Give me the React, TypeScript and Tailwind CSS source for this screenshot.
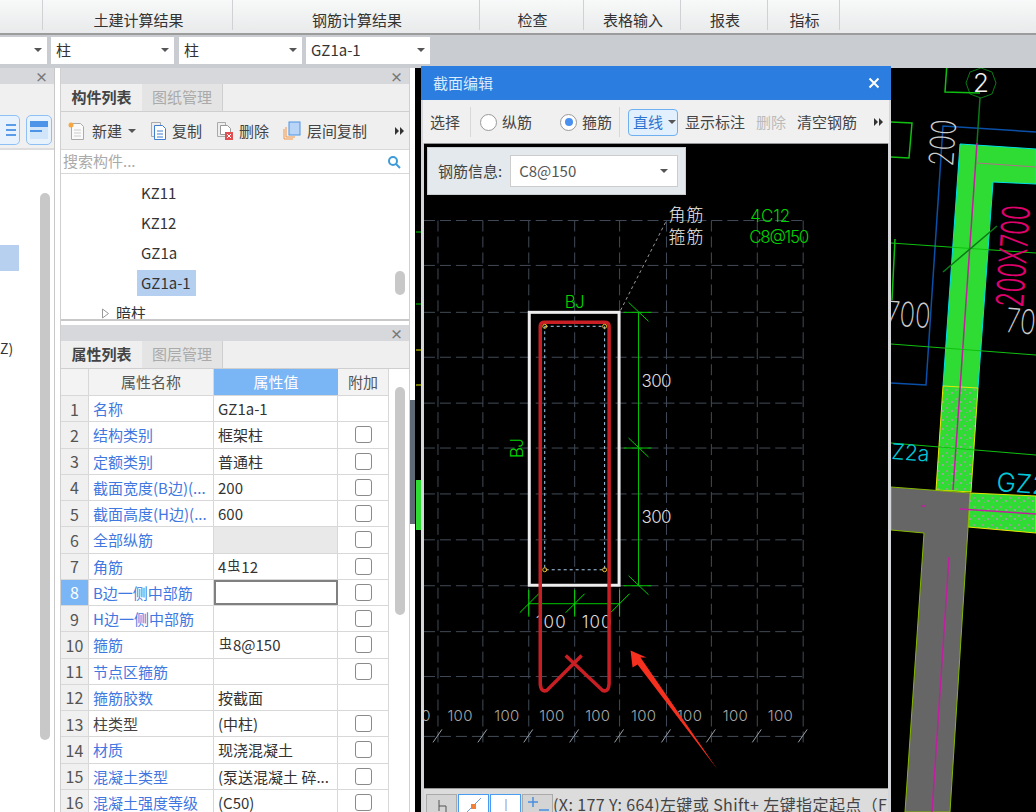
const uiFont = "font-['Noto_Sans_CJK_SC','Liberation_Sans',sans-serif]";
const cadFont = "Inter,'DejaVu Sans',sans-serif";

const ribbonTabs = [
  { w: "w-[43px]", label: "" },
  { w: "w-[190px]", label: "土建计算结果" },
  { w: "w-[247px]", label: "钢筋计算结果" },
  { w: "w-[104px]", label: "检查" },
  { w: "w-[97px]", label: "表格输入" },
  { w: "w-[87px]", label: "报表" },
  { w: "w-[72px]", label: "指标" },
];

const rows = [
  { name: "名称", value: "GZ1a-1", check: false },
  { name: "结构类别", value: "框架柱", check: true },
  { name: "定额类别", value: "普通柱", check: true },
  { name: "截面宽度(B边)(...", value: "200", check: true },
  { name: "截面高度(H边)(...", value: "600", check: true },
  { name: "全部纵筋", value: "", check: true },
  { name: "角筋", value: "4|12", check: true },
  { name: "B边一侧中部筋", value: "", check: true },
  { name: "H边一侧中部筋", value: "", check: true },
  { name: "箍筋", value: "|8@150", check: true },
  { name: "节点区箍筋", value: "", check: true },
  { name: "箍筋胶数", value: "按截面", check: false },
  { name: "柱类型", value: "(中柱)", check: true },
  { name: "材质", value: "现浇混凝土", check: true },
  { name: "混凝土类型", value: "(泵送混凝土 碎...", check: true },
  { name: "混凝土强度等级", value: "(C50)", check: true },
];

function Caret({ className = "" }: { className?: string }) {
  return (
    <span
      className={`inline-block h-0 w-0 border-x-[4px] border-t-[4px] border-x-transparent border-t-[#555] ${className}`}
    />
  );
}

function More() {
  return (
    <svg width="9" height="8" viewBox="0 0 9 8" className="shrink-0">
      <path d="M0 0l4 4-4 4zM5 0l4 4-4 4z" fill="#333" />
    </svg>
  );
}

function Combo({ label, className }: { label: string; className: string }) {
  return (
    <div
      className={`flex h-[27px] items-center justify-between bg-white pl-[5px] pr-[5px] text-[15px] text-[#333] ${className}`}
    >
      <span>{label}</span>
      <Caret />
    </div>
  );
}

function PanelHeader() {
  return (
    <div className="flex h-[16px] shrink-0 items-center justify-end bg-[#d6d8db] pr-[6px]">
      <span className="text-[13px] leading-none font-bold text-[#777]">×</span>
    </div>
  );
}

function Tabs({ active, other }: { active: string; other: string }) {
  return (
    <div className="flex h-[28px] shrink-0 border-b border-[#cfcfcf] bg-[#efefef] text-[15px]">
      <div className="flex w-[81px] items-center justify-center font-bold text-[#444]">{active}</div>
      <div className="flex w-[81px] items-center justify-center border-r border-[#cfcfcf] bg-[#e4e4e4] text-[#aaa]">
        {other}
      </div>
    </div>
  );
}

function PropertyRow({ row, index }: { row: (typeof rows)[number]; index: number }) {
  const selected = index === 8;
  const [before, after] = row.value.split("|");
  return (
    <div className="flex h-[26.25px] border-b border-[#d8d8d8] text-[15px]">
      <div
        className={`flex w-[28px] shrink-0 items-center justify-center border-r border-[#d8d8d8] text-[16px] ${
          selected ? "bg-[#7ab5f5] text-white" : "bg-[#f0f0f0] text-[#555]"
        }`}
      >
        {index}
      </div>
      <div
        className={`w-[125px] shrink-0 overflow-hidden whitespace-nowrap border-r border-[#d8d8d8] pl-[4px] leading-[25px] ${
          index === 13 ? "text-[#444]" : "text-[#3f78e0]"
        }`}
      >
        {row.name}
      </div>
      <div
        className={`w-[124px] shrink-0 whitespace-nowrap pl-[4px] leading-[25px] text-[#333] ${
          selected ? "border-2 border-[#808080]" : "border-r border-[#d8d8d8]"
        } ${index === 6 ? "bg-[#e9e9e9]" : ""}`}
      >
        {after !== undefined ? (
          <>
            {before}
            <span className="relative top-[-3px] mx-[1px] text-[13px]">虫</span>
            {after}
          </>
        ) : (
          row.value
        )}
      </div>
      <div className="flex w-[51px] shrink-0 items-center justify-center border-r border-[#d8d8d8]">
        {row.check && (
          <span className="h-[17px] w-[17px] rounded-[3px] border border-[#8a8a8a] bg-white" />
        )}
      </div>
    </div>
  );
}

function ToolIcon({ kind }: { kind: "new" | "copy" | "del" | "floor" }) {
  return (
    <svg width="18" height="20" viewBox="0 0 18 20" className="shrink-0">
      {kind === "new" && (
        <>
          <path d="M3.5 2.5h9l3 3v13h-12z" fill="#fafafa" stroke="#aaa" />
          <path d="M6 9h7M6 12h7M6 15h7" stroke="#ccc" />
          <circle cx="3" cy="4" r="2.5" fill="#f5a742" />
        </>
      )}
      {kind === "copy" && (
        <>
          <path d="M1.5 1.5h9v14h-9z" fill="#eee" stroke="#aaa" />
          <path d="M4.5 4.5h8l3 3v11h-11z" fill="#fff" stroke="#3f7fd0" />
          <path d="M7 10h6M7 13h6M7 16h6" stroke="#3f7fd0" />
        </>
      )}
      {kind === "del" && (
        <>
          <path d="M1.5 1.5h8v14h-8z" fill="#eee" stroke="#aaa" />
          <path d="M4.5 4.5h7l3 3v6h-10z" fill="#fff" stroke="#999" />
          <rect x="9" y="11" width="8" height="8" fill="#e05050" />
          <path d="M11 13l4 4M15 13l-4 4" stroke="#fff" />
        </>
      )}
      {kind === "floor" && (
        <>
          <path d="M1 8v10h9" fill="none" stroke="#f0964a" />
          <path d="M3 6v10h9" fill="none" stroke="#f0964a" />
          <rect x="6" y="1" width="11" height="13" fill="#b8d4f6" stroke="#4f94e6" />
        </>
      )}
    </svg>
  );
}

function Radio({ on, label }: { on: boolean; label: string }) {
  return (
    <div className="flex items-center gap-[5px]">
      <span className="flex h-[17px] w-[17px] items-center justify-center rounded-full border border-[#999] bg-white">
        {on && <span className="h-[8px] w-[8px] rounded-full bg-[#4a90ee]" />}
      </span>
      <span>{label}</span>
    </div>
  );
}

function StatusButton({ on, children }: { on: boolean; children: React.ReactNode }) {
  return (
    <div
      className={`flex h-[30px] w-[31px] shrink-0 justify-center border ${
        on ? "border-[#4a9cf0] bg-white" : "border-[#aaa] bg-[#d4d4d4]"
      }`}
    >
      {children}
    </div>
  );
}

const gridX = [438, 483, 529, 575, 620, 667, 712, 758, 804];
const gridY = [220, 265, 312, 357, 403, 448, 494, 540, 586, 632, 677, 737];
const bottomLabels = [460, 507, 552, 598, 644, 690, 736, 781];

function Tick({ x, y, vertical }: { x: number; y: number; vertical: boolean }) {
  return vertical ? (
    <path d={`M${x} ${y - 14}V${y + 13}M${x - 9} ${y + 9}L${x + 10} ${y - 10}`} stroke="#00e000" strokeWidth="1" />
  ) : (
    <path d={`M${x - 15} ${y}H${x + 13}M${x - 10} ${y - 10}L${x + 10} ${y + 9}`} stroke="#00c800" strokeWidth="1" />
  );
}

function SectionDrawing() {
  return (
    <svg className="absolute inset-0 h-full w-full" viewBox="424 143 465 646">
      <rect x="424" y="143" width="465" height="646" fill="#000" />
      <g stroke="#414b57" strokeWidth="1" strokeDasharray="11 5">
        {gridX.map((x) => (
          <path key={x} d={`M${x} 220V745`} />
        ))}
        {gridY.map((y) => (
          <path key={y} d={`M424 ${y}H804`} />
        ))}
      </g>
      <path d="M621 310L667 220" stroke="#999" strokeDasharray="3 3" />
      <g fontFamily="'Noto Sans CJK SC',sans-serif" fontSize="17" fontWeight="300" fill="#eee" letterSpacing="1">
        <text x="669" y="220">角筋</text>
        <text x="669" y="243">箍筋</text>
      </g>
      <g fontFamily={cadFont} fontWeight="300" fontSize="17" fill="#00d400">
        <text x="751" y="221" textLength="40">4C12</text>
        <text x="750" y="243" textLength="60">C8@150</text>
        <text x="565" y="308" textLength="20">BJ</text>
        <text transform="translate(523 458) rotate(-90)" textLength="20">BJ</text>
      </g>
      <path d="M639 312V586M529 604H620" stroke="#00c800" />
      <Tick x={639} y={312} vertical={false} />
      <Tick x={639} y={448} vertical={false} />
      <Tick x={639} y={586} vertical={false} />
      <Tick x={529} y={604} vertical />
      <Tick x={575} y={604} vertical />
      <Tick x={620} y={604} vertical />
      <rect x="529.5" y="312" width="90" height="273.5" fill="none" stroke="#eee" strokeWidth="3" />
      <rect x="545" y="326" width="60" height="244" fill="none" stroke="#a8d0f0" strokeDasharray="3 3" />
      <g fontFamily={cadFont} fontWeight="300" fontSize="17" fill="#ddd">
        <text x="642" y="387" textLength="30">300</text>
        <text x="642" y="523" textLength="30">300</text>
        <text x="536" y="628" textLength="30">100</text>
        <text x="582" y="628" textLength="30">100</text>
      </g>
      <path
        d="M566 656L603 691Q609 693 609.5 684V326Q609.5 322 605 322H545Q540.5 322 540.5 326V684Q541 693 547 691L582 656"
        fill="none"
        stroke="#c81e24"
        strokeWidth="3.5"
      />
      {[
        [545, 326],
        [605, 326],
        [545, 570],
        [605, 570],
      ].map(([x, y]) => (
        <circle key={`${x}-${y}`} cx={x} cy={y} r="2" fill="none" stroke="#f0c020" />
      ))}
      <g stroke="#9aa0a8">
        {gridX.map((x) => (
          <path key={x} d={`M${x - 5} 743L${x + 4} 730`} />
        ))}
      </g>
      <g fontFamily={cadFont} fontWeight="300" fontSize="15" fill="#a8a8a8" textAnchor="middle">
        <text x="426" y="722">0</text>
        {bottomLabels.map((x, i) => (
          <text key={i} x={x} y="722" textLength="25">100</text>
        ))}
      </g>
      <polygon points="631,651 647,658 641,658 718,770 638,665 633,668" fill="#f5301e" />
    </svg>
  );
}

function CadBackground() {
  return (
    <svg className="absolute inset-0 h-full w-full" viewBox="415 68 621 744">
      <defs>
        <pattern id="speck" width="9" height="9" patternUnits="userSpaceOnUse">
          <rect width="9" height="9" fill="#2edc33" />
          <rect x="1" y="2" width="2" height="2" fill="#8aa888" />
          <rect x="6" y="5" width="2" height="2" fill="#96a896" />
          <rect x="3" y="7" width="1" height="1" fill="#8aa888" />
        </pattern>
      </defs>
      <rect x="415" y="68" width="621" height="744" fill="#000" />
      <path d="M416 232H421M416 304H421" stroke="#00c800" />
      <path d="M416 350H421M416 385H421" stroke="#e8e800" />
      <rect x="416" y="480" width="5" height="50" fill="#2edc33" />
      <polygon points="960,144 1036,149 1036,184 993,182 978,388 943,386" fill="#2edc33" stroke="#00e0e8" />
      <polygon points="943,386 978,388 971,492 936,490" fill="url(#speck)" stroke="#e8e800" />
      <polygon points="970,493 1036,496 1036,533 968,527" fill="url(#speck)" stroke="#e8e800" />
      <polygon points="891,487 970,493 968,528 950,812 905,812 924,533 891,530" fill="#666" stroke="#86b800" />
      <path d="M977 143L953 490M949 557L932 812M960 509L1036 514M921 506L926 506" stroke="#c020a0" strokeWidth="1.5" />
      <path d="M977 163L1036 167" stroke="#b0708a" />
      <path d="M891 383L926 385L943 126L1036 132" fill="none" stroke="#0a50a8" strokeWidth="1.5" />
      <path d="M891 243L1036 253M891 344L1036 355M891 443L1036 455" stroke="#10c010" />
      <path d="M943 272L997 226M980 98L977 143" stroke="#0a7a18" strokeWidth="1.5" />
      <polygon points="981,68 992,72 996,83 992,94 981,98 970,94 966,83 970,72" fill="none" stroke="#0a7a18" />
      <path d="M891 122L912 123L909 158L891 157M947 63L945 92L980 93M895 239L892 300" fill="none" stroke="#10c010" strokeWidth="1.5" />
      <g fontFamily={cadFont} fontWeight="200">
        <text x="981" y="92" fontSize="26" fontWeight="300" fill="#eee" textAnchor="middle">2</text>
        <text transform="translate(953 167) rotate(-86)" fontSize="34" fill="#ccc" textLength="47" lengthAdjust="spacingAndGlyphs">200</text>
        <text transform="translate(885 325) rotate(4)" fontSize="34" fill="#ccc" textLength="45" lengthAdjust="spacingAndGlyphs">700</text>
        <text transform="translate(1005 332) rotate(5)" fontSize="34" fill="#ccc" textLength="30" lengthAdjust="spacingAndGlyphs">70</text>
        <text transform="translate(1023 308) rotate(-86)" fontSize="38" fontWeight="300" fill="#e0006e" textLength="102" lengthAdjust="spacingAndGlyphs">200X700</text>
        <text transform="translate(891 459) rotate(4)" fontSize="22" fontWeight="300" fill="#00c8d8" textLength="38" lengthAdjust="spacingAndGlyphs">Z2a</text>
        <text transform="translate(996 491) rotate(4)" fontSize="26" fontWeight="300" fill="#00c8d8">GZ2</text>
      </g>
    </svg>
  );
}

export default function App() {
  return (
    <div className={`relative flex h-[812px] w-[1036px] flex-col overflow-hidden bg-[#f0f0f0] ${uiFont}`}>
      {/* ribbon tabs */}
      <div className="flex h-[35px] shrink-0 border-b-2 border-[#9c9c9c] bg-gradient-to-b from-[#f8f9f9] to-[#e8eaeb]">
        {ribbonTabs.map((t) => (
          <div
            key={t.w + t.label}
            className={`${t.w} mb-[3px] flex shrink-0 items-end justify-center border-r border-[#cfd2d4] pl-[2px] text-[15px] leading-[20px] text-[#333]`}
          >
            {t.label}
          </div>
        ))}
      </div>

      {/* combo row */}
      <div className="flex h-[33px] shrink-0 items-center gap-[4px] bg-[#c9ccd1] pb-[3px]">
        <Combo label="" className="w-[47px]" />
        <Combo label="柱" className="w-[123px]" />
        <Combo label="柱" className="ml-[1px] w-[123px]" />
        <Combo label="GZ1a-1" className="w-[124px]" />
      </div>

      <div className="flex min-h-0 flex-1">
        {/* left panels */}
        <div className="flex w-[415px] shrink-0 bg-white">
          <div className="flex w-[55px] shrink-0 flex-col border-r border-[#c8c8c8]">
            <PanelHeader />
            <div className="flex h-[66px] shrink-0 items-end justify-end gap-[6px] border-b-2 border-[#ddd] bg-[#f0f0f0] pb-[3px] pr-[2px]">
              <div className="flex h-[30px] w-[21px] flex-col justify-center gap-[3px] rounded-r-[5px] border border-l-0 border-[#8fc0f5] bg-[#e8f2fd] pr-[3px]">
                <span className="ml-[6px] h-[2px] bg-[#5a9ce8]" />
                <span className="ml-[6px] h-[2px] bg-[#5a9ce8]" />
                <span className="ml-[6px] h-[2px] bg-[#5a9ce8]" />
              </div>
              <div className="flex h-[30px] w-[27px] items-center justify-center rounded-[5px] border border-[#8fc0f5] bg-[#e8f2fd]">
                <span className="block h-[18px] w-[18px] border-t-[6px] border-[#4d94e8] bg-[#d0e4fa]">
                  <span className="mt-[3px] block h-[2px] w-[12px] bg-[#4d94e8]" />
                </span>
              </div>
            </div>
            <div className="flex min-h-0 flex-1 bg-white pr-[4px] pt-[43px] text-[14px]">
              <div className="flex flex-1 flex-col">
                <div className="mt-[52px] h-[26px] w-[19px] bg-[#b8d0f0]" />
                <div className="mt-[67px] leading-[20px] text-[#333]">Z)</div>
              </div>
              <div className="h-[547px] w-[10px] rounded-[5px] bg-[#c8c8c8]" />
            </div>
          </div>

          <div className="w-[5px] shrink-0 bg-white" />

          <div className="flex w-[350px] shrink-0 flex-col border-x border-[#d0d0d0]">
            <PanelHeader />
            <Tabs active="构件列表" other="图纸管理" />
            <div className="flex h-[38px] shrink-0 items-center border-b border-[#d8d8d8] bg-[#efefef] pl-[7px] pr-[5px] pt-[1px] text-[15px] text-[#444]">
              <ToolIcon kind="new" />
              <span className="ml-[6px]">新建</span>
              <Caret className="ml-[6px] mr-[14px]" />
              <ToolIcon kind="copy" />
              <span className="ml-[4px] mr-[14px]">复制</span>
              <ToolIcon kind="del" />
              <span className="ml-[5px] mr-[14px]">删除</span>
              <ToolIcon kind="floor" />
              <span className="ml-[6px]">层间复制</span>
              <span className="flex-1" />
              <More />
            </div>
            <div className="flex h-[24px] shrink-0 items-center justify-between border-b border-[#d8d8d8] bg-white pl-[2px] pr-[8px] text-[15px] text-[#aaa]">
              <span>搜索构件...</span>
              <svg width="14" height="14" viewBox="0 0 14 14">
                <circle cx="6" cy="6" r="4" fill="none" stroke="#3f9bd8" strokeWidth="2" />
                <path d="M9 9l4 4" stroke="#3f9bd8" strokeWidth="2" />
              </svg>
            </div>
            <div className="flex h-[147px] shrink-0 justify-between overflow-hidden border-b-2 border-[#c8c8c8] bg-white text-[15px] leading-[26px] text-[#333]">
              <div className="flex flex-col gap-[4px] pt-[6px]">
                <div className="pl-[80px]">KZ11</div>
                <div className="pl-[80px]">KZ12</div>
                <div className="pl-[80px]">GZ1a</div>
                <div className="ml-[76px] bg-[#b5cff0] pl-[4px] pr-[5px]">GZ1a-1</div>
                <div className="flex items-center pl-[40px]">
                  <svg width="9" height="11" viewBox="0 0 9 11" className="mr-[6px]">
                    <path d="M1.5 1L7.5 5.5L1.5 10Z" fill="#fff" stroke="#999" />
                  </svg>
                  暗柱
                </div>
              </div>
              <div className="mr-[4px] mt-[97px] h-[24px] w-[10px] rounded-[5px] bg-[#c8c8c8]" />
            </div>

            <div className="h-[4px] shrink-0 bg-white" />

            <PanelHeader />
            <Tabs active="属性列表" other="图层管理" />
            <div className="flex min-h-0 flex-1 bg-white">
              <div className="w-[328px] shrink-0">
                <div className="flex h-[27px] border-b border-[#d8d8d8] bg-[#f3f3f3] text-[15px] text-[#555]">
                  <div className="w-[28px] shrink-0 border-r border-[#d8d8d8]" />
                  <div className="flex w-[125px] shrink-0 items-center justify-center border-r border-[#d8d8d8]">
                    属性名称
                  </div>
                  <div className="flex w-[124px] shrink-0 items-center justify-center bg-[#7ab5f5] text-white">
                    属性值
                  </div>
                  <div className="flex w-[51px] shrink-0 items-center justify-center border-r border-[#d8d8d8]">
                    附加
                  </div>
                </div>
                {rows.map((row, i) => (
                  <PropertyRow key={row.name} row={row} index={i + 1} />
                ))}
              </div>
              <div className="ml-[6px] mt-[18px] h-[228px] w-[10px] rounded-[5px] bg-[#c8c8c8]" />
            </div>
          </div>
        </div>

        {/* CAD view */}
        <div className="relative min-w-0 flex-1">
          <CadBackground />
        </div>
      </div>

      {/* slim splitter on the CAD edge */}
      <div className="absolute left-[410px] top-[400px] h-[124px] w-[5px] bg-[#5f6a75]" />

      {/* section editor window */}
      <div className="absolute left-[421px] top-[66px] flex h-[746px] w-[470px] flex-col bg-[#d4d6d9] px-[3px]">
        <div className="-mx-[3px] flex h-[34px] shrink-0 items-center justify-between bg-[#2b7de0] pl-[12px] pr-[11px] text-[15px] text-[#dcebfb]">
          <span>截面编辑</span>
          <svg width="12" height="12" viewBox="0 0 12 12">
            <path d="M1.5 1.5l9 9M10.5 1.5l-9 9" stroke="#fff" strokeWidth="2" />
          </svg>
        </div>
        <div className="-mx-[1px] flex h-[43px] shrink-0 items-center bg-[#f0f0f0] pl-[7px] pr-[6px] pt-[1px] text-[15px] text-[#444]">
          <span>选择</span>
          <span className="ml-[10px] mr-[9px] h-[30px] w-px bg-[#d8d8d8]" />
          <Radio on={false} label="纵筋" />
          <span className="w-[28px]" />
          <Radio on label="箍筋" />
          <span className="ml-[7px] mr-[8px] h-[30px] w-px bg-[#d8d8d8]" />
          <div className="flex h-[27px] w-[50px] items-center gap-[5px] rounded-[4px] border border-[#6fb0f0] bg-[#e2f0fd] pl-[4px] text-[#2f74d0]">
            <span>直线</span>
            <Caret />
          </div>
          <span className="ml-[7px]">显示标注</span>
          <span className="ml-[11px] text-[#bbb]">删除</span>
          <span className="ml-[11px]">清空钢筋</span>
          <span className="flex-1" />
          <More />
        </div>
        <div className="relative min-h-0 flex-1 overflow-hidden">
          <SectionDrawing />
          <div className="absolute left-[3px] top-[4px] flex h-[48px] w-[259px] items-center border border-[#c8cdd0] bg-[#e3e9ec] pl-[10px] text-[15px] text-[#444]">
            <span className="mr-[8px]">钢筋信息:</span>
            <Combo label="C8@150" className="h-[32px] w-[168px] border border-[#ccc] pl-[8px] pr-[9px] text-[#555]" />
          </div>
        </div>
        <div className="flex h-[23px] shrink-0 gap-px overflow-hidden bg-[#dcdcdc] pl-[2px] pt-[5px] text-[16px] leading-[20px] tracking-[0.4px] whitespace-nowrap text-[#444]">
          <StatusButton on={false}>
            <svg width="10" height="18" viewBox="0 0 10 18">
              <path d="M2 5V16M2 11H9V18" fill="none" stroke="#555" />
            </svg>
          </StatusButton>
          <StatusButton on>
            <svg width="20" height="18" viewBox="0 0 20 18">
              <path d="M2 18L17 3" stroke="#6aa0e0" />
              <rect x="7" y="9" width="5" height="5" fill="#f0803a" />
            </svg>
          </StatusButton>
          <StatusButton on>
            <svg width="10" height="18" viewBox="0 0 10 18">
              <path d="M5 4V16" stroke="#6aa0e0" />
            </svg>
          </StatusButton>
          <StatusButton on={false}>
            <svg width="22" height="18" viewBox="0 0 22 18">
              <path d="M6 2V12M1 7H11M12 15H22" stroke="#4a8ee0" strokeWidth="1.5" />
            </svg>
          </StatusButton>
          <span className="-ml-[1px]">(X: 177 Y: 664)左键或 Shift+ 左键指定起点（F</span>
        </div>
      </div>
    </div>
  );
}
